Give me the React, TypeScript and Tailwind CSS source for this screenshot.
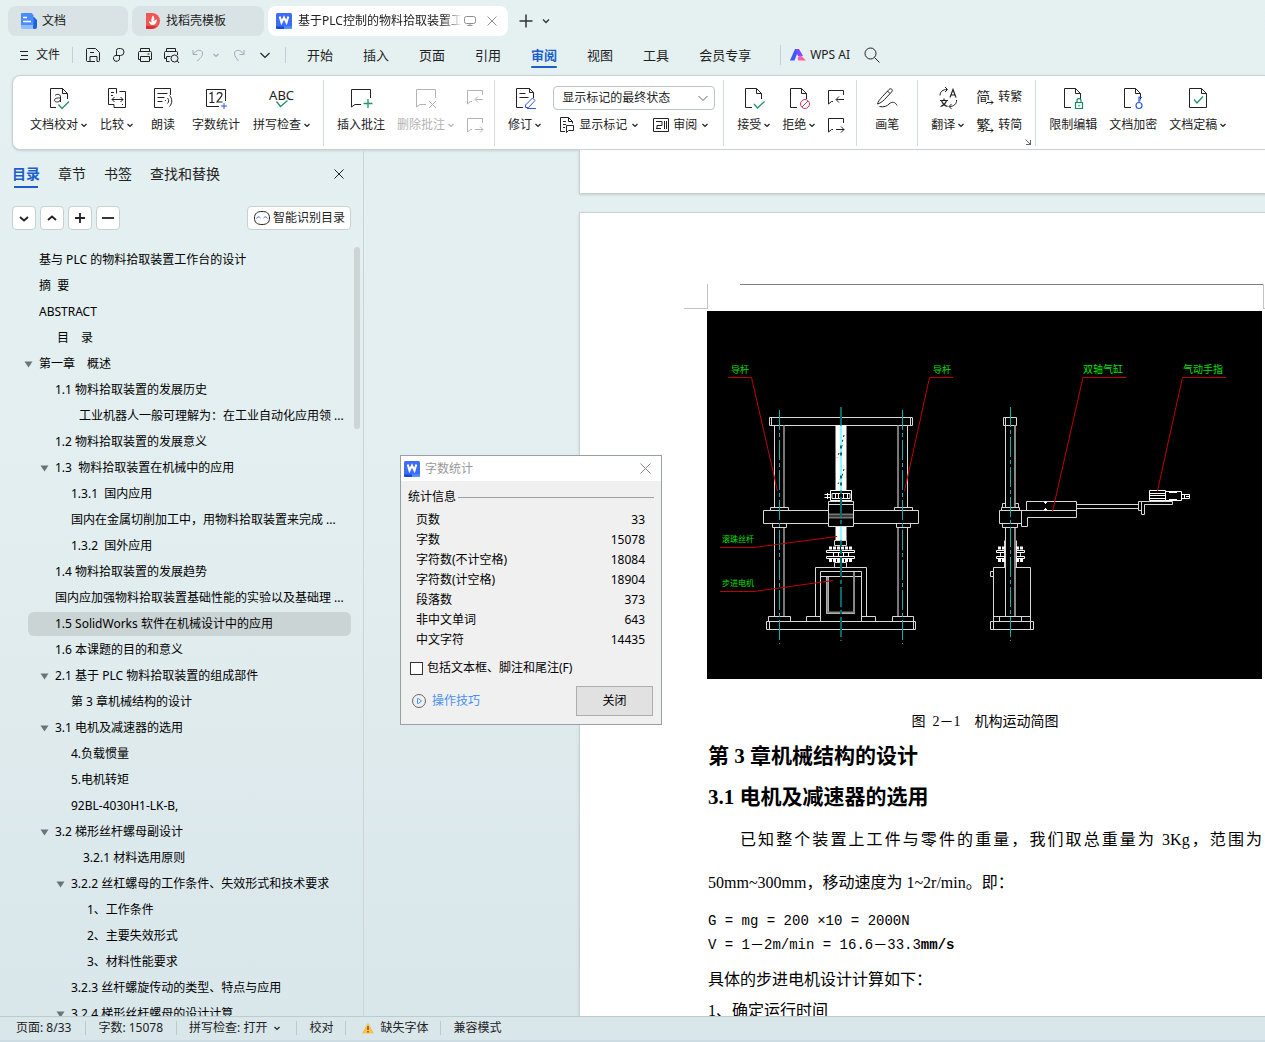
import { useState } from 'react'
import type { ReactNode } from 'react'
import clsx from 'clsx'

type IconProps = { size?: number; className?: string; children: ReactNode }

function Icon({ size = 24, className, children }: IconProps) {
  return (
    <svg width={size} height={size} viewBox={`0 0 ${size} ${size}`} fill="none" stroke="currentColor" className={clsx('shrink-0', className)} aria-hidden="true">
      {children}
    </svg>
  )
}

const Chevron = ({ className }: { className?: string }) => (
  <svg width="6" height="6" viewBox="0 0 6 6" fill="none" stroke="currentColor" strokeWidth="1.3" className={clsx('shrink-0', className)} aria-hidden="true">
    <path d="M.5 2 3 4.4 5.5 2" />
  </svg>
)

const WLogo = () => (
  <svg width="16" height="16" viewBox="0 0 16 16" className="shrink-0" aria-hidden="true">
    <rect width="16" height="16" rx="1.5" fill="#3f6cf6" />
    <path d="M0 13.5h8V16H1.5A1.5 1.5 0 0 1 0 14.5Z" fill="#1549d8" />
    <path d="M8 13.5h8v1A1.5 1.5 0 0 1 14.5 16H8Z" fill="#4f93ff" />
    <path d="m3.700 3.500 1.800 6L8 4.500l2.500 5 1.800-6" fill="none" stroke="#fff" strokeWidth="2" />
  </svg>
)

const page = 'M10 21.500H3.500v-19h11l5 5V13M14.500 2.500v5h5'

const icons = {
  proof: (
    <Icon>
      <path d="M9 21.500H3.500v-19h12l5 5V13M15.500 2.500v5h5" />
      <path d="M8 9.500c1-1.400 5.500-2 5.500 1.300V16M13.500 12c-3-.2-6 .2-6 2.300s4.500 2.600 6-.4" />
      <path d="m11.500 18.500 3.500 4 7-7" stroke="#23936a" strokeWidth="1.300" />
    </Icon>
  ),
  compare: (
    <Icon>
      <path d="M3.500 18.500v-16h8v5M3.500 18.500H9v3h11.500v-16h-6M6 6.500h3M6 9.500h2M17 18.500h1" />
      <path d="M7 13.500h11M9.500 11 7 13.500 9.500 16M15.500 11l2.500 2.500-2.500 2.500" />
    </Icon>
  ),
  read: (
    <Icon>
      <path d="M12 21.500H3.500v-19h16V9M6.500 7.500h10M6.500 11.500h7M6.500 15.500h5" />
      <path d="M14 14.500h.8M16.500 12c1.500 1.500 1.500 4 0 5.500M18.500 9.500c3 3 3 8 0 11" />
    </Icon>
  ),
  count: (
    <Icon>
      <path d="M15 20.500H2.500v-17h19V15" />
      <path d="m5.500 8 2.500-1.500V16M5.500 16.500h5M13 8.500c.5-2.700 5-2.500 5 .2 0 2-3.500 4.500-5 7.300h5.500" strokeWidth="1.200" />
      <path d="M20 17v6M17 20h6" stroke="#2a5bd7" />
    </Icon>
  ),
  insert: (
    <Icon>
      <path d="M12 18.500H6L2.500 21V3.500h19V12" />
      <path d="M19 13v9M14.500 17.500h9" stroke="#23936a" strokeWidth="1.300" />
    </Icon>
  ),
  remove: (
    <Icon>
      <path d="M12 18.500H6L2.500 21V3.500h19V12" />
      <path d="m15 15 7 7M22 15l-7 7" />
    </Icon>
  ),
  revise: (
    <Icon>
      <path d="M10 21.500H3.500v-19h13l4 4V12M16.500 2.500v4h4M6.500 7.500h6M6.500 11.500h9" />
      <path d="m12.500 19 7-7 2.500 2.500-6.500 7h-3ZM14 22.500h9" stroke="#2b5be0" />
    </Icon>
  ),
  accept: (
    <Icon>
      <path d={page} />
      <path d="m12 18 3.500 4 7-6.500" stroke="#23936a" strokeWidth="1.300" />
    </Icon>
  ),
  reject: (
    <Icon>
      <path d={page} />
      <circle cx="18" cy="18" r="4.500" stroke="#d0375b" />
      <path d="m15 21 6-6" stroke="#d0375b" />
    </Icon>
  ),
  pen: (
    <Icon>
      <path d="M2.500 18c.5-2 2-4.500 5-7.500l6.500-7c2-2 4.500.5 2.500 2.500l-7 7.500c-2.500 2.500-5 4-7 4.500ZM12.500 5l2.500 2.500" />
      <path d="M4.500 20.500c5 1 7.500-.5 9.500-2.500 3-2.800 6.500-2 8 1.500" />
    </Icon>
  ),
  translate: (
    <Icon>
      <path d="m14 11.500 3-8 3 8M15 9h4M4 14.500h8M8 12.500v2M5.500 14.500c1 3 3 5 6 6M10.500 14.500c-1 3-3 5-6 6" strokeWidth="1.200" />
      <path d="M4 9.500c0-4 3-6 7-6M9 1l2.500 2.500L9 6M20.500 14c.5 4-3 6.500-7 6.500M15.500 18 13 20.500l2.500 2.500" />
    </Icon>
  ),
  restrict: (
    <Icon>
      <path d={page} />
      <path d="M14.500 16.500h7v6h-7zM16 16.500v-2c0-2.500 4-2.500 4 0v2M18 19v1.500" stroke="#118a5c" strokeWidth="1.200" />
    </Icon>
  ),
  encrypt: (
    <Icon>
      <path d={page} />
      <path d="M18 16.500v-6M18 11.500h3M18 14h2" stroke="#2b5be0" strokeWidth="1.200" />
      <circle cx="18" cy="19.500" r="3" stroke="#2b5be0" strokeWidth="1.200" />
    </Icon>
  ),
  final: (
    <Icon>
      <path d="M3.500 2.500h12l5 5v14h-17zM15.500 2.500v5h5" />
      <path d="m8 13.500 3 3.500 6-6.500" stroke="#23936a" strokeWidth="1.300" />
    </Icon>
  ),
}

const NoteArrow = ({ back }: { back?: boolean }) => (
  <Icon size={18}>
    <path d="M6 13.500H4.500L1.500 16V2.500h15V7" />
    {back ? <path d="M17 11.500H9.500M12 8.500l-3 3 3 3" /> : <path d="M9 13.500h8M14 10.500l3 3-3 3" />}
  </Icon>
)

type ToolProps = { icon: ReactNode; label: string; drop?: boolean; disabled?: boolean; className?: string }

function Tool({ icon, label, drop, disabled, className }: ToolProps) {
  return (
    <button disabled={disabled} className={clsx('flex shrink-0 flex-col items-center gap-[7px]', disabled && 'text-[#b4b4b4]', className)}>
      {icon}
      <span className="flex items-center gap-[3px] leading-4 whitespace-nowrap">
        {label}
        {drop && <Chevron />}
      </span>
    </button>
  )
}

const Group = ({ className, children }: { className?: string; children: ReactNode }) => (
  <div className={clsx('flex h-[66px] shrink-0 items-start border-r border-[#d5dadb] pt-[6px]', className)}>{children}</div>
)

const menus = ['开始', '插入', '页面', '引用', '审阅', '视图', '工具', '会员专享']

function TitleBar() {
  return (
    <header className="flex h-10 shrink-0 items-start gap-1 px-2 pt-[6px]">
      <button className="flex h-[30px] w-[120px] items-center gap-[5px] rounded-lg bg-[#d9e2e4] pl-3">
        <svg width="17" height="16" viewBox="0 0 17 16" aria-hidden="true">
          <path d="M5 4h9l3 3v7a2 2 0 0 1-2 2H5Z" fill="#1e63dc" />
          <path d="M1.500 0h10l2 2v11H1V.5Z" fill="#4a8cfb" />
          <path d="M1 12h12v2.500A1.500 1.500 0 0 0 14.500 16H2.500A1.500 1.500 0 0 1 1 14.500Z" fill="#8fbcff" />
          <path d="M3 4.500h4M3 8.500h8" stroke="#fff" strokeWidth="1.300" />
        </svg>
        文档
      </button>
      <button className="flex h-[30px] w-[132px] items-center gap-[5px] rounded-lg bg-[#d9e2e4] pl-3">
        <svg width="17" height="16" viewBox="0 0 17 16" aria-hidden="true">
          <path d="M2 0h6a8 8 0 0 1 0 16H2Z" fill="#f25555" />
          <path d="M2 13h10.500A8 8 0 0 1 8 16H2Z" fill="#d8302f" />
          <path d="M9 2.500c2 2 1.500 4 .3 5.500 1.200-.8 2.700-1.500 3.700-1.500-.2 3.500-2 5.500-4.500 5.500-2 0-3.500-1.500-3.500-4l2.500 1.500C7 7 7.500 4 9 2.500Z" fill="#fff" />
        </svg>
        找稻壳模板
      </button>
      <div className="flex h-[30px] w-[240px] items-center rounded-lg bg-white pl-2">
        <WLogo />
        <span className="ml-[6px] w-[166px] whitespace-nowrap [mask-image:linear-gradient(to_right,#000_145px,transparent_164px)]">基于PLC控制的物料拾取装置工</span>
        <Icon size={12} className="text-[#8a8f91]">
          <path d="M2.500 1.500h7a2 2 0 0 1 2 2v3a2 2 0 0 1-2 2h-7a2 2 0 0 1-2-2v-3a2 2 0 0 1 2-2ZM6 8.500v2M3.500 10.500h5" />
        </Icon>
        <button aria-label="关闭标签" className="ml-[11px] text-[#8a8f91]">
          <Icon size={10}><path d="m.5.500 9 9M9.500.5l-9 9" /></Icon>
        </button>
      </div>
      <div className="ml-[7px] flex h-[30px] items-center gap-[9px] text-[#333]">
        <button aria-label="新建"><Icon size={14}><path d="M7 .5v13M.5 7h13" strokeWidth="1.500" /></Icon></button>
        <button aria-label="标签列表"><Icon size={8}><path d="M1 2.500 4 5.500l3-3" strokeWidth="1.300" /></Icon></button>
      </div>
    </header>
  )
}

function MenuBar() {
  return (
    <nav className="flex h-[35px] shrink-0 items-center pb-[5px] pl-5">
      <button className="flex items-center gap-[7px]">
        <Icon size={9}><path d="M0 .5h8M1 4.500h7M0 8.500h8" /></Icon>
        文件
      </button>
      <span className="ml-3 h-4 w-px bg-[#c5cfd1]" />
      <div className="ml-3 flex items-center gap-[10px]">
        <button aria-label="保存"><Icon size={16}><path d="M10 14.500H2.500a1 1 0 0 1-1-1v-11a1 1 0 0 1 1-1h8l4 4v8a1 1 0 0 1-1 1H12V9.500H5v5M5 5.500h4" /></Icon></button>
        <button aria-label="输出为PDF"><Icon size={16}><path d="M5.500 8.500v-5a2 2 0 0 1 2-2h2a3.500 3.500 0 0 1 0 7H4.500M8.500 8.500v2a3 3 0 0 1-6 1.500c-.3-2 .7-3.500 2.500-3.500" /></Icon></button>
        <button aria-label="打印"><Icon size={16}><path d="M3.500 12.500h-2V5.500a1 1 0 0 1 1-1h11a1 1 0 0 1 1 1v7h-2M3.500 4.500v-3h9v3M3.500 9.500h9v5h-9zM10.500 7h2" /></Icon></button>
        <button aria-label="打印预览"><Icon size={17}><path d="M3 11.500H1.500V5.500a1 1 0 0 1 1-1h11a1 1 0 0 1 1 1V8M3.500 4.500v-3h9v3M6.500 14.500h-3v-5h4M14 13.500l2 2.500" /><circle cx="11.500" cy="11.500" r="3.500" /></Icon></button>
        <button aria-label="撤销" className="ml-px flex items-center gap-2 text-[#a4adaf]">
          <Icon size={14}><path d="M2 2v4.500h4.500M2.500 6C5 1.500 11 1 11.500 5c.3 3-2.500 6-5.500 8" /></Icon>
          <Chevron />
        </button>
        <button aria-label="恢复" className="ml-[3px] text-[#a4adaf]"><Icon size={14}><path d="M12 2v4.500H7.500M11.500 6C9 1.500 3 1 2.500 5c-.3 3 2.500 6 4 8" /></Icon></button>
        <button aria-label="自定义" className="ml-[3px]"><Icon size={12}><path d="m1.500 4 4.500 4.500L10.500 4" strokeWidth="1.200" /></Icon></button>
      </div>
      <span className="ml-[14px] h-4 w-px bg-[#c5cfd1]" />
      <div className="ml-[6px] flex text-[13px] leading-5">
        {menus.map((m) => (
          <a key={m} href="#" className={clsx('relative px-[15px] whitespace-nowrap', m === '审阅' && 'font-bold text-[#1b5fcb]')}>
            {m}
            {m === '审阅' && <span className="absolute inset-x-[15px] -bottom-[3px] h-0.5 rounded bg-[#1b5fcb]" />}
          </a>
        ))}
      </div>
      <span className="ml-[14px] h-5 w-px bg-[#c5cfd1]" />
      <button className="ml-[9px] flex items-center gap-1 whitespace-nowrap">
        <svg width="16" height="12" viewBox="0 0 16 12" aria-hidden="true">
          <path d="M5 0h4L4.500 11.500H0Z" fill="#3c5bff" />
          <path d="M5 0h4l4 7H8Z" fill="#7a4bff" />
          <path d="M11 6.500 16 11.500H9c-2 0-2-5 2-5Z" fill="#ff5fa8" />
        </svg>
        WPS AI
      </button>
      <button aria-label="搜索" className="ml-[14px]"><Icon size={16}><circle cx="6.500" cy="6.500" r="5.500" /><path d="m10.500 10.500 5 5" /></Icon></button>
    </nav>
  )
}

function Ribbon() {
  return (
    <div className="ml-3 flex h-[75px] shrink-0 overflow-hidden rounded-l-lg border border-r-0 border-[#c6d3d4] bg-white pt-1 text-[#222] shadow-sm">
      <Group className="gap-[13px] pr-[13px] pl-[17px]">
        <Tool icon={icons.proof} label="文档校对" drop />
        <Tool icon={icons.compare} label="比较" drop />
        <Tool icon={icons.read} label="朗读" className="mr-1 ml-[5px]" />
        <Tool icon={icons.count} label="字数统计" />
        <Tool
          icon={
            <span className="flex h-6 flex-col items-center text-[13px] leading-[18px]">
              ABC
              <svg width="14" height="8" viewBox="0 0 14 8" fill="none" stroke="#23936a" strokeWidth="1.300" className="-mt-1" aria-hidden="true"><path d="m1.500 1.500 4 5 7-6" /></svg>
            </span>
          }
          label="拼写检查"
          drop
        />
      </Group>
      <Group className="gap-3 pr-[10px] pl-[13px]">
        <Tool icon={icons.insert} label="插入批注" />
        <Tool icon={icons.remove} label="删除批注" drop disabled />
        <div className="flex flex-col gap-[10px] pt-[2px] text-[#b4b4b4]">
          <button disabled aria-label="上一条批注"><NoteArrow back /></button>
          <button disabled aria-label="下一条批注"><NoteArrow /></button>
        </div>
      </Group>
      <Group className="gap-3 pr-2 pl-[13px]">
        <Tool icon={icons.revise} label="修订" drop />
        <div className="flex flex-col gap-[7px]">
          <div className="relative">
            <select aria-label="标记显示方式" className="h-6 w-[162px] appearance-none rounded border border-[#bfc4c6] bg-white pl-2 leading-4">
              <option>显示标记的最终状态</option>
              <option>最终状态</option>
              <option>原始状态</option>
            </select>
            <Icon size={10} className="pointer-events-none absolute top-[7px] right-[7px] text-[#666]"><path d="m.5 3 4.500 4.500L9.500 3" /></Icon>
          </div>
          <div className="flex items-center gap-[15px] pl-[6px] leading-4">
            <button className="flex items-center gap-1 whitespace-nowrap">
              <Icon size={16}><path d="M6 14.500H1.500v-14h8l4 4v2M9.500.5v4h4M4 4.500h3M4 7.500h3M4 10.500h2M7.500 15.500v-7h7v5H9.500Z" /></Icon>
              显示标记
              <Chevron className="ml-px" />
            </button>
            <button className="flex items-center gap-1 whitespace-nowrap">
              <Icon size={16}><path d="M.5 1.500h15v13H.5zM3 4.500h6v4H4v2.500M3 11.500h5M11.500 4v8M13.500 4v8" /></Icon>
              审阅
              <Chevron className="ml-px" />
            </button>
          </div>
        </div>
      </Group>
      <Group className="gap-3 pr-[11px] pl-[13px]">
        <Tool icon={icons.accept} label="接受" drop />
        <Tool icon={icons.reject} label="拒绝" drop />
        <div className="flex flex-col gap-[10px] pt-[2px]">
          <button aria-label="上一条修订"><NoteArrow back /></button>
          <button aria-label="下一条修订"><NoteArrow /></button>
        </div>
      </Group>
      <Group className="px-[18px]">
        <Tool icon={icons.pen} label="画笔" />
      </Group>
      <Group className="relative gap-3 pr-[13px] pl-[13px]">
        <Tool icon={icons.translate} label="翻译" drop />
        <div className="flex flex-col gap-3 pt-[3px] leading-4">
          {[['简', '转繁'], ['繁', '转简']].map(([glyph, label]) => (
            <button key={label} className="flex items-center gap-1 whitespace-nowrap">
              <span className="relative w-[18px] text-left text-[14px]">
                {glyph}
                <svg width="7" height="5" viewBox="0 0 7 5" fill="none" stroke="currentColor" className="absolute right-0 bottom-0 bg-white" aria-hidden="true"><path d="M0 2.500h6M4 .5l2 2-2 2" /></svg>
              </span>
              {label}
            </button>
          ))}
        </div>
        <Icon size={6} className="absolute right-1 bottom-[1px] text-[#666]"><path d="m.5.500 5 5M5.500 1v4.500H1" /></Icon>
      </Group>
      <div className="flex shrink-0 gap-3 pt-[6px] pl-[13px]">
        <Tool icon={icons.restrict} label="限制编辑" />
        <Tool icon={icons.encrypt} label="文档加密" />
        <Tool icon={icons.final} label="文档定稿" drop />
      </div>
    </div>
  )
}

type Entry = { x: number; text: string; open?: boolean; active?: boolean }

const outline: Entry[] = [
  { x: 39, text: '基与 PLC 的物料拾取装置工作台的设计' },
  { x: 39, text: '摘  要' },
  { x: 39, text: 'ABSTRACT' },
  { x: 57, text: '目　录' },
  { x: 39, text: '第一章　概述', open: true },
  { x: 55, text: '1.1 物料拾取装置的发展历史' },
  { x: 79, text: '工业机器人一般可理解为：在工业自动化应用领 ...' },
  { x: 55, text: '1.2 物料拾取装置的发展意义' },
  { x: 55, text: '1.3  物料拾取装置在机械中的应用', open: true },
  { x: 71, text: '1.3.1  国内应用' },
  { x: 71, text: '国内在金属切削加工中，用物料拾取装置来完成 ...' },
  { x: 71, text: '1.3.2  国外应用' },
  { x: 55, text: '1.4 物料拾取装置的发展趋势' },
  { x: 55, text: '国内应加强物料拾取装置基础性能的实验以及基础理 ...' },
  { x: 55, text: '1.5 SolidWorks 软件在机械设计中的应用', active: true },
  { x: 55, text: '1.6 本课题的目的和意义' },
  { x: 55, text: '2.1 基于 PLC 物料拾取装置的组成部件', open: true },
  { x: 71, text: '第 3 章机械结构的设计' },
  { x: 55, text: '3.1 电机及减速器的选用', open: true },
  { x: 71, text: '4.负载惯量' },
  { x: 71, text: '5.电机转矩' },
  { x: 71, text: '92BL-4030H1-LK-B,' },
  { x: 55, text: '3.2 梯形丝杆螺母副设计', open: true },
  { x: 83, text: '3.2.1 材料选用原则' },
  { x: 71, text: '3.2.2 丝杠螺母的工作条件、失效形式和技术要求', open: true },
  { x: 87, text: '1、工作条件' },
  { x: 87, text: '2、主要失效形式' },
  { x: 87, text: '3、材料性能要求' },
  { x: 71, text: '3.2.3 丝杆螺旋传动的类型、特点与应用' },
  { x: 71, text: '3.2.4 梯形丝杆螺母的设计计算', open: true },
]

const squareButtons = [
  { label: '展开', d: 'm2 5 4 3.500L10 5' },
  { label: '收起', d: 'm2 8 4-3.500L10 8' },
  { label: '升级', d: 'M6 1v10M1 6h10' },
  { label: '降级', d: 'M0 6h12' },
]

function Sidebar() {
  return (
    <aside className="flex w-[364px] shrink-0 flex-col overflow-hidden border-r border-[#cbd4d6]">
      <div className="flex h-12 shrink-0 items-center gap-[18px] pl-3 text-[14px] text-[#222]">
        <a href="#" className="relative font-bold text-[#1b5fcb]">
          目录
          <span className="absolute inset-x-0.5 -bottom-1 h-0.5 bg-[#1b5fcb]" />
        </a>
        <a href="#">章节</a>
        <a href="#">书签</a>
        <a href="#">查找和替换</a>
        <button aria-label="关闭导航" className="mr-[19px] ml-auto"><Icon size={10}><path d="m.5.500 9 9M9.500.5l-9 9" /></Icon></button>
      </div>
      <div className="flex shrink-0 gap-1 pt-2 pr-3 pl-3">
        {squareButtons.map((b) => (
          <button key={b.label} aria-label={b.label} className="flex size-6 items-center justify-center rounded border border-[#c7d1d2] bg-white">
            <Icon size={12}><path d={b.d} strokeWidth="1.800" /></Icon>
          </button>
        ))}
        <button className="ml-auto flex h-6 items-center gap-[3px] rounded border border-[#c7d1d2] bg-white pr-[5px] pl-[6px]">
          <Icon size={16}>
            <path d="M8 1.500c5 0 7.500 2 7.500 6.500s-2.500 6.500-7.500 6.500S.5 12.500.5 8 3 1.500 8 1.500Z" />
            <path d="M2.500 8.500c.5-2 3-2 4-.5M9.500 8c1-1.500 3.500-1.500 4 .5" stroke="#3d6fe8" />
          </Icon>
          智能识别目录
        </button>
      </div>
      <div className="mt-[17px] flex min-h-0 flex-1">
        <ul className="min-w-0 flex-1 overflow-hidden">
          {outline.map((e) => (
            <li key={e.text} className="relative flex h-[26px] items-center">
              {e.active && <span className="absolute inset-y-px right-[3px] left-7 rounded-md bg-[#cbd4d5]" />}
              <a href="#" className="relative flex items-center whitespace-pre text-black" style={{ paddingLeft: e.x - 15 }}>
                <span className="w-[15px]">{e.open && <svg width="9" height="7" viewBox="0 0 9 7" aria-hidden="true"><path d="M.5.500h8l-4 6Z" fill="#6d7375" /></svg>}</span>
                {e.text}
              </a>
            </li>
          ))}
        </ul>
        <div className="mr-[3px] h-[182px] w-[6px] rounded-full bg-[#cdd4d5]" />
      </div>
    </aside>
  )
}

// Each view is drawn in the picture's own 555 x 368 units
function MechanismDrawing() {
  return (
    <svg viewBox="0 0 555 368" className="mt-0.5 block w-full bg-black" role="img" aria-label="机构运动简图">
      <g fill="none" stroke="#d8d8d8">
        <path d="M62.500 106.500h143v8h-143zM64.500 106.500v8M203.500 106.500v8" />
        <path d="M67.500 114.500v82M200.500 114.500v82M67.500 216.500v89M200.500 216.500v89" />
        <path d="M77 114.500v82M191 114.500v82M77 216.500v89M191 216.500v89" stroke="#777" strokeWidth="2" />
        <path d="M63.500 196.500h18v3h-18zM187.500 196.500h18v3h-18zM65.500 212.500h14v4h-14zM189.500 212.500h14v4h-14z" />
        <path d="M121.500 199.500h-65v13h65M146.500 199.500h65v13h-65" />
        <path d="M61.500 305.500h22v5h-22zM185.500 305.500h21v5h-21zM59.500 310.500h149v8h-149zM62.500 310.500v8M206.500 310.500v8" />
        <path d="M129 114.500h10v65h-10zM129 215.500h10v14h-10z" fill="#fff" stroke="#fff" />
        <path d="M123.500 179.500h21v10h-21z" stroke="#fff" />
        <path d="M117.500 183.500h6M117.500 186.500h6M120.500 182v6M125 182.500h18v5h-18zM128.500 182v6M131.500 182v6M136.500 182v6M140.500 182v6" stroke="#fff" />
        <path d="M121.500 190.500h25v25h-25zM121.500 193.500h25" />
        <path d="M122 203.500h24M122 206.500h24" stroke="#777" strokeWidth="2" />
        <path d="M127.500 229.500h12v5h-12zM127.500 251.500h12v5h-12z" />
        <path d="M122 237h24M122 249.500h24" stroke="#fff" strokeWidth="3" strokeDasharray="3 1" />
        <path d="M119.500 239.500h28v2h-28zM119.500 245.500h28v2h-28zM126.500 241v5M131.500 241v5M136.500 241v5M141.500 241v5" stroke="#fff" />
        <path d="M108.500 305.500v-49h51v49M99.500 310.500v-5h14M168.500 310.500v-5h-14" />
        <path d="M113.500 310.500v-50h41v50M113.500 265.500h41M119.500 265.500v37h28v-37M121.500 265.500v36" />
        <path d="M120 301.500h27M120.500 266v36M147 261v41" stroke="#888" strokeWidth="2" />
      </g>
      <g stroke="#222">
        <path d="m137 124-2 8M135 134l-1 6M132 142l-2 5M137 158l-2 7M134 167l-3 6" strokeDasharray="2 3" />
      </g>
      <g fill="none" stroke="#d8d8d8">
        <path d="M296.500 106.500h13v8h-13zM298.500 106.500v8M298.500 114.500v82M298.500 216.500v89" />
        <path d="M308 114.500v82M308 216.500v89" stroke="#888" strokeWidth="2" />
        <path d="M295.500 196.500v-4h3M308.500 192.500h3v4M294.500 196.500h18v3h-18zM295.500 212.500h15v4h-15z" />
        <path d="M292.500 199.500h22v13h-22zM314.500 199.500h55v7h-49v9h-6zM319.500 199.500v-9h50v9" />
        <path d="M337 191.500h3M337 198.500h3M338.500 190v3M338.500 197v3" stroke="#fff" />
        <path d="M369.500 193.500h62M369.500 197.500h62M431.500 190.500h3v9h-3zM434.500 190.500h31v3h-28v10h-3z" />
        <path d="M442.500 179.500h16v10h-16zM458.500 180.500h16v9h-16zM462 181.500h8M462 188.500h8" stroke="#fff" />
        <path d="M443 182.500h15M443 184.500h15M443 187.500h15M474.500 183.500h8v4h-8zM477.500 183v5M479 185.500h3" stroke="#fff" />
        <path d="M297.500 229.500v27M309.500 229.500v27M293.500 241v5M313.500 241v5" />
        <path d="M291 237h7M309 237h8M291 249.500h7M309 249.500h8" stroke="#fff" strokeWidth="3" strokeDasharray="3 1" />
        <path d="M289.500 239.500h8v2h-8zM309.500 239.500h8v2h-8zM289.500 245.500h8v2h-8zM309.500 245.500h8v2h-8z" stroke="#fff" />
        <path d="M286.500 310.500v-54h12M308.500 256.500h15v54M283.500 260.500h3v5h-3zM286.500 305.500h37M292.500 305.500v5M314.500 305.500v5" />
        <path d="M283.500 310.500h43v8h-43zM286.500 310.500v8M323.500 310.500v8" />
      </g>
      <g fill="none" stroke="#00b4b4" strokeDasharray="20 3 4 3">
        <path d="M72.500 99v234M195.500 99v234M303.500 96v234" />
        <path d="M134 96v234" stroke="#006c6c" strokeWidth="2" />
      </g>
      <path d="M134 114.500v65M134 215.500v14" stroke="#8ff" strokeWidth="2" strokeDasharray="20 3 4 3" />
      <g fill="none" stroke="#c00000">
        <path d="M21 66.500h23.500l26 113.500M246 66.500h-23.500l-25 113.500M13 236.500h34l83-11M13 280.500h34l79-11" />
        <path d="M419.500 66.500H376L345.500 200.500M519 66.500h-43.500L450.500 180" />
      </g>
      <g fill="#00e000" fontFamily="'Noto Sans CJK SC', sans-serif">
        <text x="24" y="62" fontSize="9">导杆</text>
        <text x="226" y="62" fontSize="9">导杆</text>
        <text x="15" y="231" fontSize="8">滚珠丝杆</text>
        <text x="15" y="275" fontSize="8">步进电机</text>
        <text x="376" y="62" fontSize="10">双轴气缸</text>
        <text x="476" y="62" fontSize="10">气动手指</text>
      </g>
    </svg>
  )
}

function DocumentPane() {
  return (
    <main className="min-w-0 flex-1 overflow-hidden pl-[215px] text-black">
      <div className="h-11 w-[794px] border border-t-0 border-[#c9d1d3] bg-white shadow" />
      <article className="mt-[18px] w-[794px] border border-[#c9d1d3] bg-white pt-[71px] pr-[110px] pb-32 pl-[127px] font-['Liberation_Serif','Noto_Sans_CJK_SC',serif] text-[16px] shadow">
        <div className="-mr-[25px] -ml-[23px] flex h-[25px]">
          <span className="w-6 border-r border-b border-[#c4c4c4]" />
          <span className="ml-8 flex-1 border-t border-[#7d7d7d]" />
          <span className="w-6 border-b border-l border-[#c4c4c4]" />
        </div>
        <MechanismDrawing />
        <div className="pl-px">
          <p className="mt-[31px] text-center text-[14px] leading-6 whitespace-pre">图  2－1　机构运动简图</p>
          <h1 className="mt-2 text-[21px] leading-7 font-bold">第 3 章机械结构的设计</h1>
          <h2 className="mt-[13px] text-[21px] leading-7 font-bold">3.1 电机及减速器的选用</h2>
          <p className="mt-[7px] indent-8 text-justify leading-[43px]">已知整个装置上工件与零件的重量，我们取总重量为 3Kg，范围为 50mm~300mm，移动速度为 1~2r/min。即：</p>
          <div className="mt-[5px] font-['Liberation_Mono','Noto_Sans_CJK_SC',monospace] text-[14px] leading-6">
            <p>G = mg = 200 ×10 = 2000N</p>
            <p>V = 1－2m/min = 16.6－33.3<b>mm/s</b></p>
          </div>
          <p className="mt-[7px] leading-[31px]">具体的步进电机设计计算如下：</p>
          <p className="leading-[31px]">1、确定运行时间</p>
        </div>
      </article>
    </main>
  )
}

const stats = [
  ['页数', 33],
  ['字数', 15078],
  ['字符数(不计空格)', 18084],
  ['字符数(计空格)', 18904],
  ['段落数', 373],
  ['非中文单词', 643],
  ['中文字符', 14435],
]

function WordCountDialog({ onClose }: { onClose: () => void }) {
  return (
    <div role="dialog" aria-label="字数统计" className="absolute top-[455px] left-[400px] w-[262px] border border-[#9a9fa1] bg-[#f0f0f0] pb-2 text-black">
      <div className="flex h-[25px] items-center bg-white pr-[10px] pl-[3px] text-[#999]">
        <WLogo />
        <span className="ml-[5px]">字数统计</span>
        <button aria-label="关闭窗口" onClick={onClose} className="ml-auto text-[#888]"><Icon size={11}><path d="m.5.500 10 10M10.500.5l-10 10" /></Icon></button>
      </div>
      <div className="flex items-center gap-0.5 pt-2 pr-[7px] pl-[7px] leading-4">
        统计信息
        <span className="h-px flex-1 bg-[#a0a0a0]" />
      </div>
      <table className="mt-[5px] mr-4 ml-[15px] w-[229px]">
        <tbody>
          {stats.map(([name, value]) => (
            <tr key={name} className="h-5 leading-5">
              <th scope="row" className="text-left font-normal">{name}</th>
              <td className="text-right">{value}</td>
            </tr>
          ))}
        </tbody>
      </table>
      <label className="mt-[10px] flex items-center gap-1 pl-[9px] leading-4">
        <input type="checkbox" className="size-[13px] appearance-none border border-[#333] bg-white checked:bg-[#333]" />
        包括文本框、脚注和尾注(F)
      </label>
      <div className="mt-[10px] flex items-center justify-between pr-2 pl-[11px]">
        <a href="#" className="flex items-center gap-[6px] text-[#4a90f0]">
          <Icon size={14}><circle cx="7" cy="7" r="6.500" stroke="#666" /><path d="M5.500 4.500h1L9.500 7l-3 2.500h-1Z" /></Icon>
          操作技巧
        </a>
        <button onClick={onClose} className="h-[30px] w-[77px] border border-[#adadad] bg-[#e1e1e1]">关闭</button>
      </div>
    </div>
  )
}

const Divider = () => <span className="h-[14px] w-px bg-[#bccacd]" />

function StatusBar() {
  return (
    <footer className="flex h-[26px] shrink-0 items-center gap-3 border-t border-b-2 border-t-[#bccbd0] border-b-[#cddce2] pb-px pl-4 whitespace-nowrap text-[#222]">
      <span className="pr-0.5">页面: 8/33</span>
      <Divider />
      <span className="pr-px">字数: 15078</span>
      <Divider />
      <button className="flex items-center gap-[7px] pr-1">拼写检查: 打开 <Chevron /></button>
      <Divider />
      <button>校对</button>
      <Divider />
      <button className="flex items-center gap-[6px] pl-1">
        <svg width="12" height="12" viewBox="0 0 12 12" aria-hidden="true">
          <path d="M6 .5 12 11.500H0Z" fill="#f9bf52" />
          <path d="M6 4v4M6 9v1.500" stroke="#7a4a00" strokeWidth="1.300" />
        </svg>
        缺失字体
      </button>
      <Divider />
      <span>兼容模式</span>
    </footer>
  )
}

export default function App() {
  const [showCount, setShowCount] = useState(true)

  return (
    <div className="relative flex h-screen flex-col overflow-hidden bg-linear-to-b from-[#e5f0f1] via-[#e2eeef] to-[#d9e6ea] font-['Noto_Sans','Noto_Sans_CJK_SC',sans-serif] text-[12px] leading-5 text-[#222]">
      <TitleBar />
      <MenuBar />
      <Ribbon />
      <div className="flex min-h-0 flex-1">
        <Sidebar />
        <DocumentPane />
      </div>
      <StatusBar />
      {showCount && <WordCountDialog onClose={() => setShowCount(false)} />}
    </div>
  )
}
